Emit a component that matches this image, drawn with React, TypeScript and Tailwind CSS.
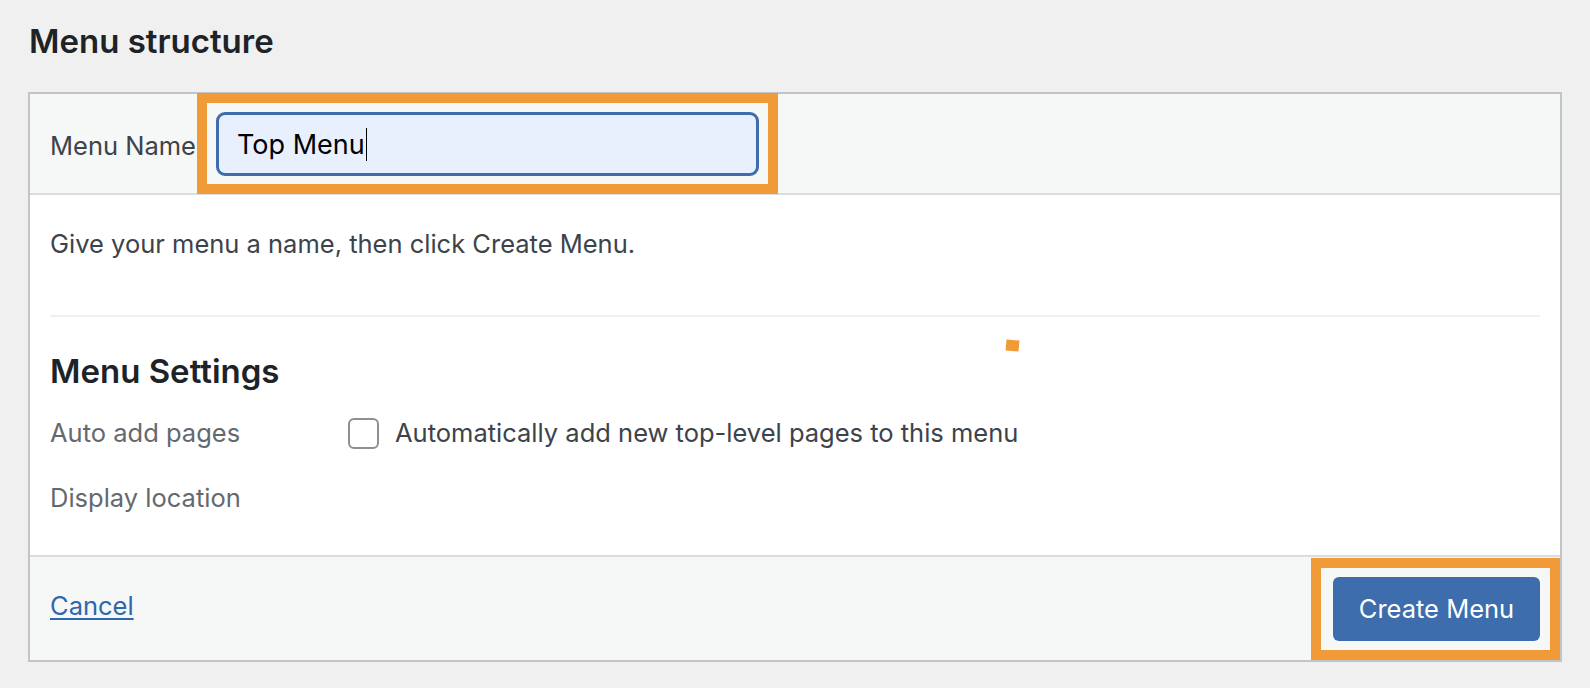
import React from "react";

export default function App() {
  return (
    <div className="w-full h-[688px] bg-[#f0f0f1] font-['Inter',sans-serif] text-[#3c434a] overflow-hidden">
      <div className="pl-[29px] pt-[21px]">
        <h2 className="text-[33px] leading-[40px] font-semibold text-[#1d2327]">Menu structure</h2>
      </div>
      <div className="mt-[31px] ml-[28px] w-[1534px] border-2 border-[#c3c4c7] bg-white">
        {/* header */}
        <div className="flex items-stretch h-[101px] bg-[#f6f7f7] border-b-2 border-[#dcdcde] pl-[20px]">
          <label className="self-center w-[147px] pt-[4px] text-[25.5px] leading-[32px] text-[#3c434a]">Menu Name</label>
          <div className="-mt-[1px] -mb-[1px] border-[10px] border-[#f09a38] flex items-center pl-[9px] w-[581px]">
            <div className="flex items-center w-[543px] h-[64px] rounded-[9px] border-[3px] border-[#3d6dac] bg-[#e8f0fe] pl-[18px] pt-[2px]">
              <span className="text-[27px] leading-[34px] text-black">Top Menu</span>
              <span className="inline-block w-[1.5px] h-[33px] bg-black ml-[1px]"></span>
            </div>
          </div>
        </div>
        {/* body */}
        <div className="relative px-[20px]">
          <p className="pt-[34px] text-[25.5px] leading-[30px] text-[#3c434a]">Give your menu a name, then click Create Menu.</p>
          <div className="mt-[56px] h-[2px] bg-[#f0f0f1]"></div>
          <h3 className="mt-[34px] text-[33px] leading-[40px] font-semibold text-[#1d2327]">Menu Settings</h3>
          <div className="flex items-center mt-[25px] h-[34px]">
            <span className="w-[298px] text-[25.5px] leading-[30px] text-[#646970]">Auto add pages</span>
            <span className="w-[31px] h-[31px] rounded-[6px] border-2 border-[#8c8f94] bg-white"></span>
            <span className="ml-[16px] text-[25.5px] leading-[30px] text-[#3c434a]">Automatically add new top-level pages to this menu</span>
          </div>
          <div className="flex items-center mt-[31px] h-[34px]">
            <span className="text-[25.5px] leading-[30px] text-[#646970]">Display location</span>
          </div>
          <div className="h-[40px]"></div>
          <span className="absolute left-[976px] top-[145px] w-[13px] h-[11px] bg-[#f09a38] rotate-[5deg]"></span>
        </div>
        {/* footer */}
        <div className="flex items-stretch justify-between h-[105px] bg-[#f6f7f7] border-t-2 border-[#dcdcde] pl-[20px]">
          <a href="#" className="self-center mb-[6px] text-[25.5px] leading-[30px] text-[#2d68ad] underline decoration-[2px] underline-offset-[3px]">Cancel</a>
          <div className="mt-[1px] border-[10px] border-[#f09a38] flex items-center pl-[12px] pr-[10px] w-[249px]">
            <button className="w-[207px] h-[64px] rounded-[6px] bg-[#3d6dac] text-white text-[25.5px] leading-[30px]">Create Menu</button>
          </div>
        </div>
      </div>
    </div>
  );
}
